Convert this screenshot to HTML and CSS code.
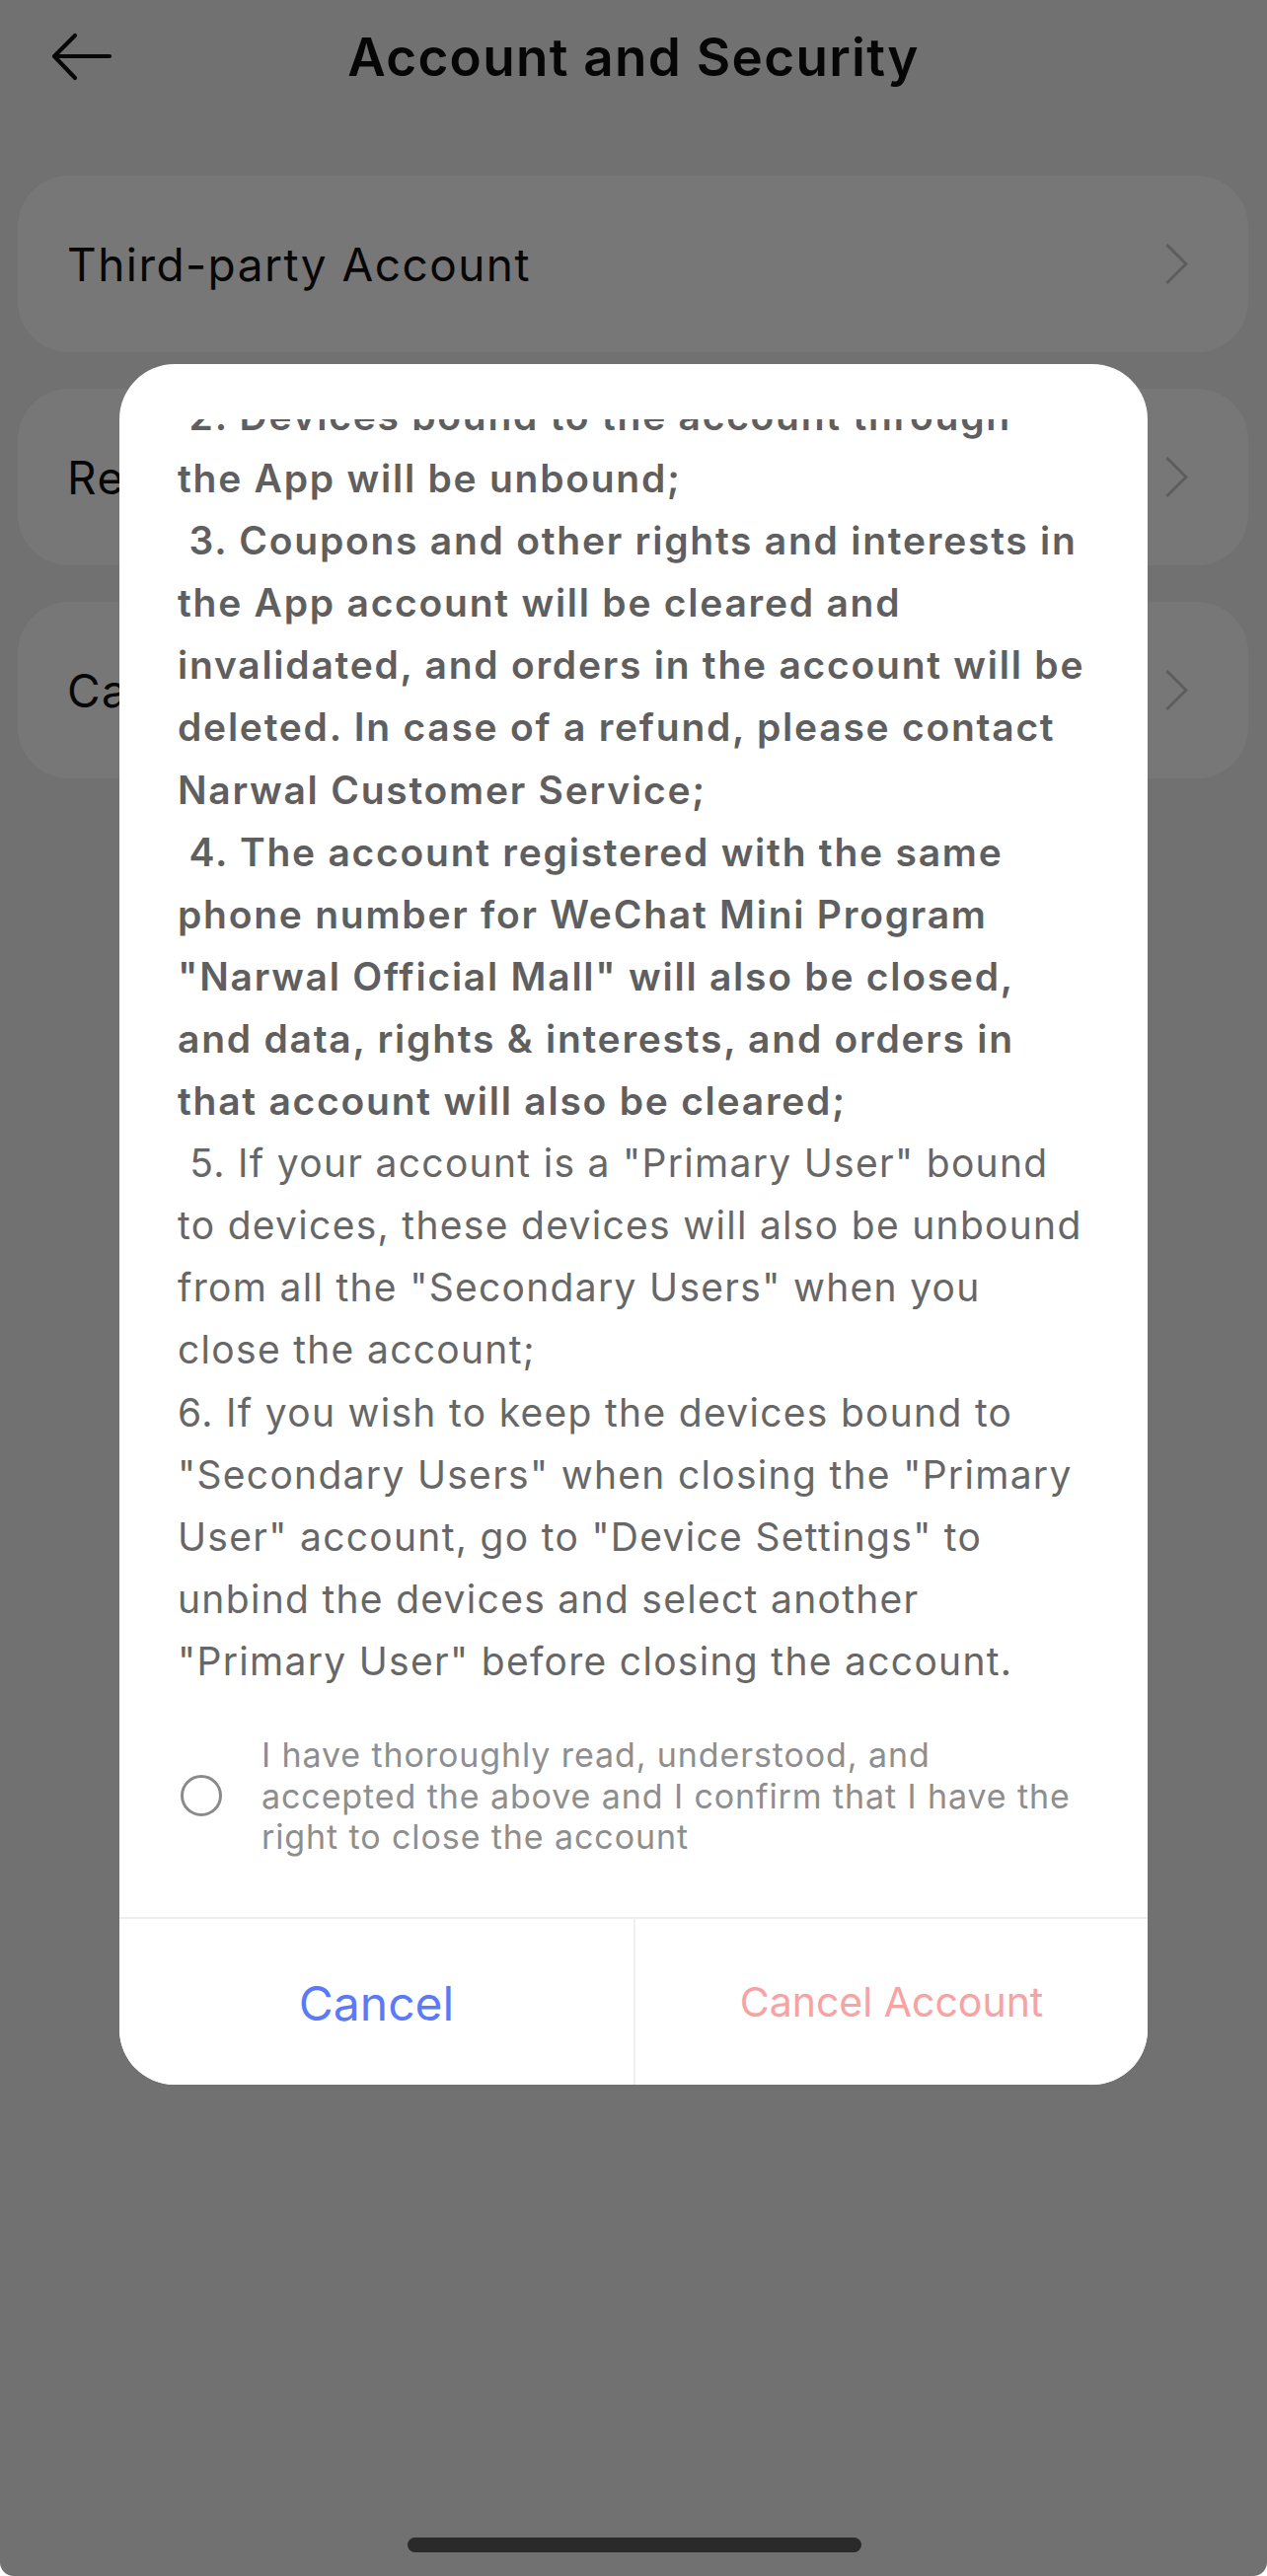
FILE: index.html
```html
<!DOCTYPE html>
<html lang="en">
<head>
<meta charset="utf-8">
<title>Account and Security</title>
<link rel="stylesheet" href="styles.css">
</head>
<body>
<div class="screen">
  <header class="nav">
    <button class="back" aria-label="Back">
      <svg width="64" height="50" viewBox="0 0 64 50" fill="none" stroke="#111" stroke-width="4.2" stroke-linecap="round" stroke-linejoin="round">
        <path d="M24 3 L3 24 L24 46"/>
        <path d="M4 24 H59"/>
      </svg>
    </button>
    <h1 class="title">Account and Security</h1>
  </header>

  <main class="list">
    <div class="card"><span class="card-label">Third-party Account</span><span class="chev"></span></div>
    <div class="card"><span class="card-label">Reset Password</span><span class="chev"></span></div>
    <div class="card"><span class="card-label">Cancel Account</span><span class="chev"></span></div>
  </main>

  <div class="overlay">
    <section class="modal">
      <div class="scroll">
        <div class="scroll-inner">
          <p class="strong">&nbsp;2. Devices bound to the account through<br>the App will be unbound;</p>
          <p class="strong">&nbsp;3. Coupons and other rights and interests in<br>the App account will be cleared and<br>invalidated, and orders in the account will be<br>deleted. In case of a refund, please contact<br>Narwal Customer Service;</p>
          <p class="strong">&nbsp;4. The account registered with the same<br>phone number for WeChat Mini Program<br>"Narwal Official Mall" will also be closed,<br>and data, rights &amp; interests, and orders in<br>that account will also be cleared;</p>
          <p>&nbsp;5. If your account is a "Primary User" bound<br>to devices, these devices will also be unbound<br>from all the "Secondary Users" when you<br>close the account;</p>
          <p>6. If you wish to keep the devices bound to<br>"Secondary Users" when closing the "Primary<br>User" account, go to "Device Settings" to<br>unbind the devices and select another<br>"Primary User" before closing the account.</p>
        </div>
      </div>
      <label class="confirm">
        <span class="radio"></span>
        <span class="confirm-text">I have thoroughly read, understood, and<br>accepted the above and I confirm that I have the<br>right to close the account</span>
      </label>
      <div class="actions">
        <button class="btn btn-cancel">Cancel</button>
        <button class="btn btn-danger">Cancel Account</button>
      </div>
    </section>
  </div>

  <div class="home-indicator"></div>
</div>
</body>
</html>
```

FILE: styles.css
```css
html, body {
  margin: 0;
  padding: 0;
  background: #ffffff;
}

.screen {
  position: relative;
  width: 1284px;
  height: 2611px;
  background: #f2f2f2;
  overflow: hidden;
  border-radius: 0 0 14px 14px;
  font-family: Inter, "Noto Sans", "Liberation Sans", sans-serif;
}

.nav {
  position: relative;
  height: 116px;
  display: flex;
  align-items: center;
  justify-content: center;
}

.back {
  position: absolute;
  left: 52px;
  top: 33px;
  padding: 0;
  border: 0;
  background: none;
  display: flex;
}

.title {
  margin: 0;
  font-size: 53px;
  font-weight: 600;
  color: #0e0e0e;
  letter-spacing: 1.3px;
}

.list {
  display: flex;
  flex-direction: column;
  gap: 37px;
  padding: 62px 19px 0 18px;
}

.card {
  height: 179px;
  background: #ffffff;
  border-radius: 52px;
  display: flex;
  align-items: center;
  justify-content: space-between;
  padding: 0 63px 0 50px;
}

.card-label {
  font-size: 46px;
  color: #111;
  letter-spacing: 1.45px;
}

.chev {
  width: 26px;
  height: 26px;
  border-top: 3px solid #c8c8c8;
  border-right: 3px solid #c8c8c8;
  transform: rotate(45deg);
  margin-right: 4px;
}

.overlay {
  position: absolute;
  inset: 0;
  background: rgba(0, 0, 0, 0.535);
  display: flex;
  justify-content: center;
  align-items: flex-start;
  padding-top: 369px;
}

.modal {
  width: 1042px;
  background: #ffffff;
  border-radius: 56px;
  overflow: hidden;
  display: flex;
  flex-direction: column;
}

.scroll {
  margin-top: 56px;
  height: 1291px;
  overflow: hidden;
  padding: 0 40px 0 59px;
}

.scroll-inner {
  margin-top: -35px;
}

.scroll-inner p {
  margin: 0;
  font-size: 39px;
  line-height: 63.1px;
  color: #676767;
  letter-spacing: 1.3px;
  white-space: nowrap;
}

.scroll-inner p.strong {
  font-weight: 600;
  color: #5f5f5f;
  letter-spacing: 1.75px;
}

.confirm {
  display: flex;
  align-items: center;
  gap: 40px;
  padding: 42px 30px 60px 62px;
}

.radio {
  flex: none;
  width: 36px;
  height: 36px;
  border: 3.2px solid #8a8a8a;
  border-radius: 50%;
}

.confirm-text {
  font-size: 34px;
  line-height: 41.5px;
  color: #8e8e8e;
  letter-spacing: 0.9px;
  white-space: nowrap;
}

.actions {
  display: grid;
  grid-template-columns: 1fr 1fr;
  border-top: 2px solid #eeeeee;
  height: 168px;
}

.btn {
  border: 0;
  background: #ffffff;
  font-family: inherit;
  padding: 0;
}

.btn-cancel {
  font-size: 48px;
  color: #5b7af7;
  padding-top: 4px;
}

.btn-danger {
  font-size: 41px;
  color: #f7a3a3;
  border-left: 2px solid #f0f0f0;
}

.home-indicator {
  position: absolute;
  left: 413px;
  top: 2572px;
  width: 460px;
  height: 15px;
  border-radius: 8px;
  background: #2a2a2a;
}
```
